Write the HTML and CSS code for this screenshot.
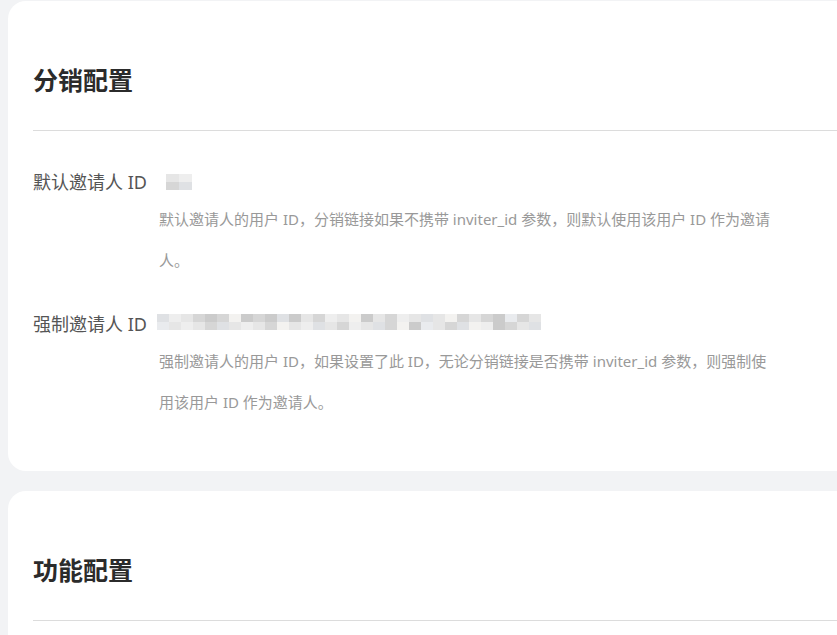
FILE: index.html
```html
<!DOCTYPE html>
<html lang="zh-CN">
<head>
<meta charset="utf-8">
<title>分销配置</title>
<link rel="stylesheet" href="styles.css">
</head>
<body>
<main class="page">
  <section class="card">
    <h2 class="card-title">分销配置</h2>
    <hr class="divider">
    <div class="form-item">
      <div class="row">
        <label class="label">默认邀请人 ID</label>
        <div class="value value-short">
          <span class="px a"></span><span class="px d"></span>
          <span class="px b"></span><span class="px e"></span>
        </div>
      </div>
      <p class="desc">默认邀请人的用户 ID，分销链接如果不携带 inviter_id 参数，则默认使用该用户 ID 作为邀请人。</p>
    </div>
    <div class="form-item">
      <div class="row">
        <label class="label">强制邀请人 ID</label>
        <div class="value value-long">
          <span class="px e"></span><span class="px d"></span><span class="px a"></span><span class="px b"></span><span class="px c"></span><span class="px b"></span><span class="px f"></span><span class="px c"></span><span class="px b"></span><span class="px c"></span><span class="px e"></span><span class="px c"></span><span class="px a"></span><span class="px b"></span><span class="px d"></span><span class="px a"></span><span class="px f"></span><span class="px c"></span><span class="px a"></span><span class="px b"></span><span class="px d"></span><span class="px a"></span><span class="px e"></span><span class="px a"></span><span class="px f"></span><span class="px b"></span><span class="px a"></span><span class="px b"></span><span class="px c"></span><span class="px g"></span><span class="px b"></span><span class="px a"></span>
          <span class="px g"></span><span class="px a"></span><span class="px d"></span><span class="px a"></span><span class="px b"></span><span class="px e"></span><span class="px a"></span><span class="px d"></span><span class="px a"></span><span class="px b"></span><span class="px f"></span><span class="px a"></span><span class="px d"></span><span class="px e"></span><span class="px a"></span><span class="px b"></span><span class="px d"></span><span class="px a"></span><span class="px e"></span><span class="px b"></span><span class="px f"></span><span class="px c"></span><span class="px g"></span><span class="px a"></span><span class="px b"></span><span class="px e"></span><span class="px f"></span><span class="px d"></span><span class="px c"></span><span class="px b"></span><span class="px a"></span><span class="px e"></span>
        </div>
      </div>
      <p class="desc">强制邀请人的用户 ID，如果设置了此 ID，无论分销链接是否携带 inviter_id 参数，则强制使用该用户 ID 作为邀请人。</p>
    </div>
  </section>
  <section class="card">
    <h2 class="card-title">功能配置</h2>
    <hr class="divider">
  </section>
</main>
</body>
</html>
```

FILE: styles.css
```css
html, body {
  margin: 0;
  padding: 0;
  overflow: hidden;
  background: #f2f3f5;
}

body {
  font-family: "Noto Sans", "Noto Sans CJK SC", sans-serif;
  color: #333;
}

.page {
  display: flex;
  flex-direction: column;
  gap: 20px;
  padding: 1px 0 0 8px;
  width: 880px;
}

.card {
  background: #fff;
  border-radius: 18px;
  padding: 61px 0 48px 25px;
}

.card-title {
  margin: 0;
  font-size: 25px;
  line-height: 36px;
  font-weight: 700;
  color: #2b2b2b;
}

.divider {
  margin: 32px 0 32px;
  border: 0;
  border-top: 1px solid #dcdcdc;
  height: 0;
}

.form-item + .form-item {
  margin-top: 24px;
}

.row {
  display: flex;
  align-items: center;
  height: 36px;
}

.label {
  width: 126px;
  flex: none;
  font-size: 18px;
  color: #555;
  white-space: nowrap;
}

.value {
  display: grid;
  grid-auto-rows: 8px;
}

.value-short {
  grid-template-columns: repeat(2, 13px);
  margin-left: 7px;
  margin-top: 2px;
}

.value-long {
  grid-template-columns: repeat(32, 12px);
  margin-left: -2px;
  margin-top: -2px;
}

.px { display: block; }
.px.a { background: #e6e6e6; }
.px.b { background: #d6d6d6; }
.px.c { background: #cbcbcb; }
.px.d { background: #eeeeee; }
.px.e { background: #dfe1e4; }
.px.f { background: #f3f2f0; }
.px.g { background: #e9ebee; }

.desc {
  margin: 0 0 0 126px;
  width: 618px;
  font-size: 15px;
  line-height: 41px;
  color: #999;
}
```
